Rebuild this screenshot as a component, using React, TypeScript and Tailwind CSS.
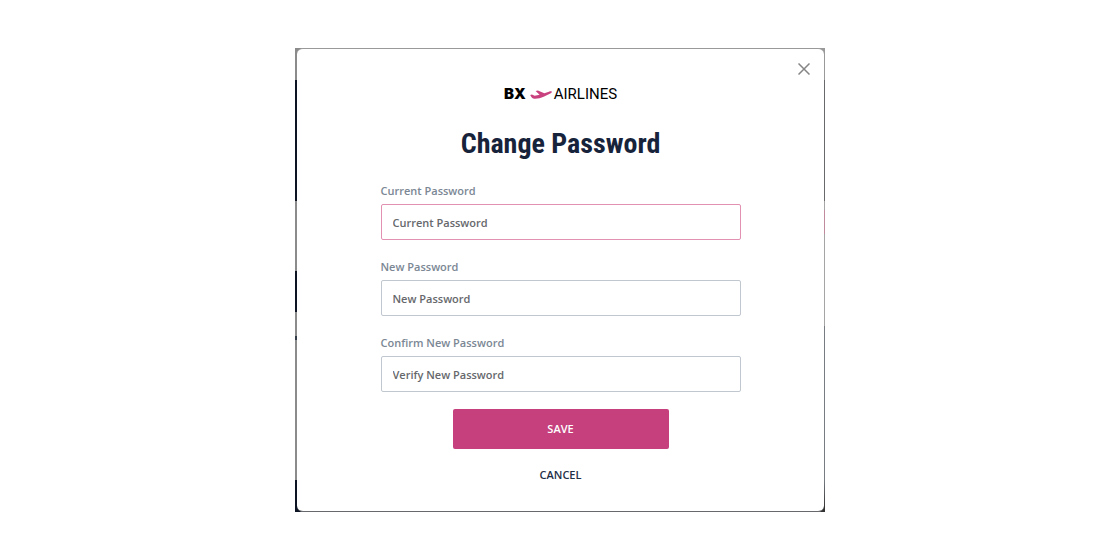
import React from "react";

type FieldProps = {
  id: string;
  label: string;
  placeholder: string;
  active?: boolean;
};

function Field({ id, label, placeholder, active = false }: FieldProps) {
  return (
    <div className="flex flex-col gap-0.5">
      <label htmlFor={id} className="text-[11px]/[22px] font-semibold text-[#7b8794]">
        {label}
      </label>
      <input
        id={id}
        type="password"
        placeholder={placeholder}
        className={
          "h-9 w-full rounded-xs border bg-white px-[11px] text-[11px] font-semibold text-[#66686c] outline-none placeholder:text-[#66686c] placeholder:opacity-100 " +
          (active ? "border-[#e391b3]" : "border-[#c0c7cf]")
        }
      />
    </div>
  );
}

function Logo() {
  return (
    <div className="flex items-center justify-center text-[15px]/5 text-black">
      <span className="font-['Inter',sans-serif] font-black">BX</span>
      <svg viewBox="0 0 22 10" className="mt-0.5 mr-0.5 ml-1 h-2.5 w-[22px]" fill="#c9417f" aria-hidden="true">
        <path d="M.2 5 1.9 4.5 4.7 5.7 9.6 4.7 5.6 1 7.9.6 14.3 3.2 18.9 1.7C20.3 1.2 21.6 1.2 21.8 1.7 22 2.3 21.2 3 19.8 3.8L14.2 6.5C10.4 8.3 7.6 8.8 4.5 8.7 2.5 8.6 1.3 7.2.2 5Z" />
      </svg>
      <span className="font-['Roboto',sans-serif]">AIRLINES</span>
    </div>
  );
}

export default function App() {
  return (
    <main className="flex min-h-screen items-center justify-center bg-white font-['Open_Sans',sans-serif]">
      <div className="w-full max-w-[530px] bg-[linear-gradient(#8b8b8b_7%,#0d1424_7%,#0d1424_33%,#8b8b8b_33%,#8b8b8b_48%,#0d1424_48%,#0d1424_57%,#8b8b8b_57%,#8b8b8b_62%,#343b48_62%,#343b48_63%,#8b8b8b_63%,#8b8b8b_93%,#0d1424_93%)] bg-[length:8px_100%] bg-no-repeat">
        <div className="bg-[linear-gradient(#999_7%,#68696b_7%,#68696b_33%,#a5a5a5_33%,#a5a5a5_35%,#c08b9d_35%,#c08b9d_40%,#a5a5a5_40%,#a5a5a5_60%,#777c83_60%,#777c83_93%,#333_99%)] bg-[length:8px_100%] bg-right bg-no-repeat">
          <section
            role="dialog"
            aria-labelledby="dialog-title"
            className="ml-0.5 mr-px flex flex-col rounded-md border-y border-t-[#999] border-b-[#66686b] bg-white pb-[26px]"
          >
            <button type="button" aria-label="Close" className="mt-3.5 mr-3.5 self-end text-[#858585]">
              <svg viewBox="0 0 12 12" className="size-3" fill="none" stroke="currentColor" strokeWidth="1.5">
                <path d="M.5.5 11.5 11.5M11.5.5.5 11.5" />
              </svg>
            </button>
            <div className="mx-auto mt-[9px] flex w-full max-w-[360px] flex-col">
              <Logo />
              <h1
                id="dialog-title"
                className="mt-5 text-center font-['Roboto_Condensed','Roboto',sans-serif] text-[28px]/10 font-bold text-[#17233a]"
              >
                Change Password
              </h1>
              <form className="mt-4 flex flex-col gap-4" onSubmit={(e) => e.preventDefault()}>
                <Field id="current" label="Current Password" placeholder="Current Password" active />
                <Field id="new" label="New Password" placeholder="New Password" />
                <Field id="confirm" label="Confirm New Password" placeholder="Verify New Password" />
                <div className="flex flex-col items-center gap-4 pt-px">
                  <button type="submit" className="h-10 w-3/5 rounded-xs bg-[#c5407d] text-[11px] font-semibold text-white">
                    SAVE
                  </button>
                  <button type="button" className="text-[11px]/5 font-semibold text-[#1f2f47]">
                    CANCEL
                  </button>
                </div>
              </form>
            </div>
          </section>
        </div>
      </div>
    </main>
  );
}
